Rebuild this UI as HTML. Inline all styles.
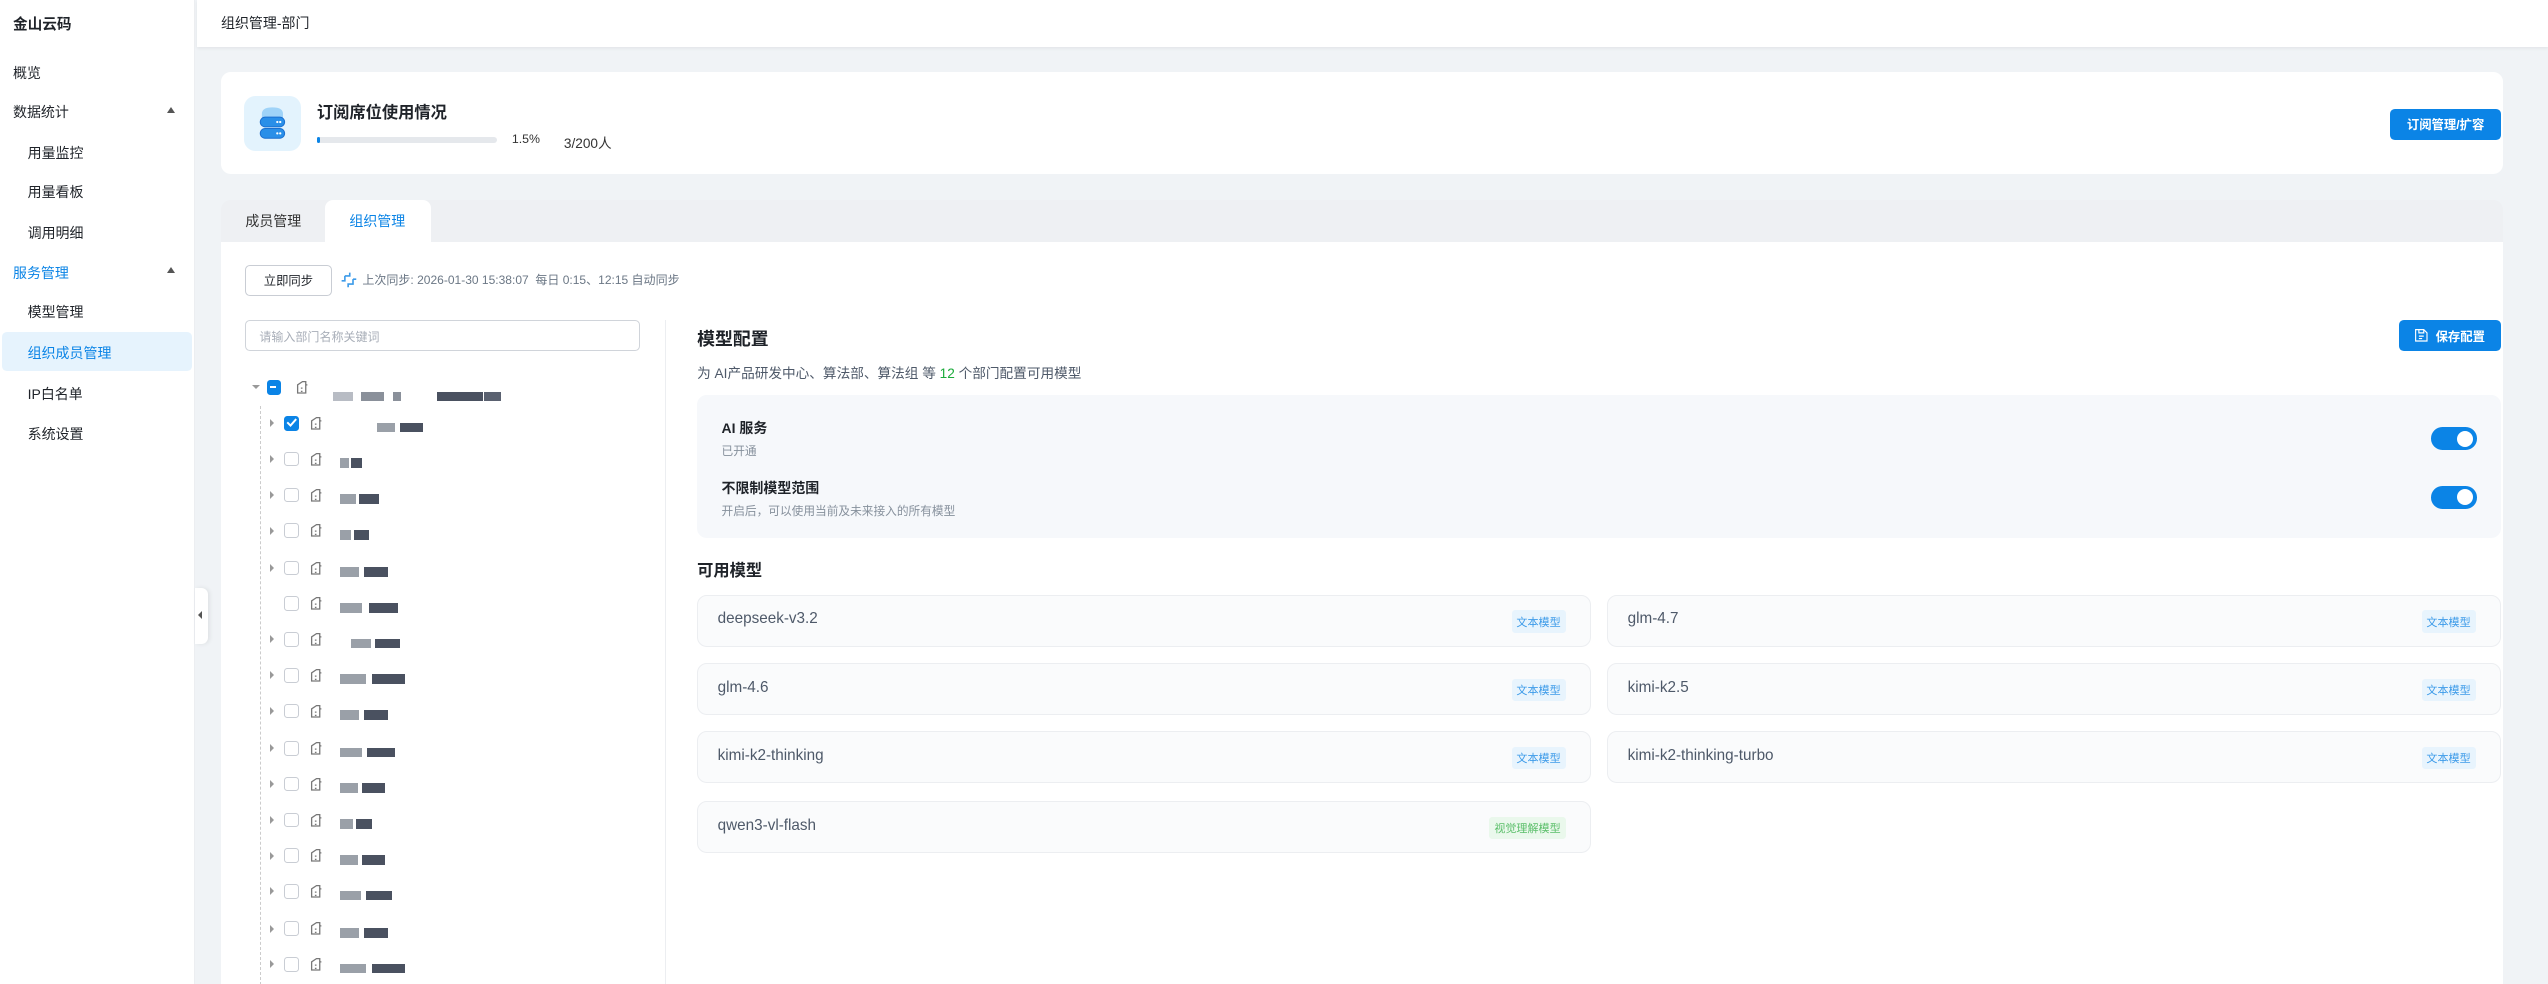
<!DOCTYPE html>
<html><head><meta charset="utf-8"><style>
*{box-sizing:border-box;margin:0;padding:0}
html,body{width:2548px;height:984px;overflow:hidden;background:#f0f3f6}
#r{zoom:1.625;width:1568px;height:606px;position:relative;font-family:"Liberation Sans","Noto Sans CJK SC",sans-serif;color:#1f2329;font-size:8.6px}
.a{position:absolute;white-space:nowrap}
.side{left:0;top:0;width:120px;height:606px;background:#fff;border-right:1px solid #eceef1}
.mi{position:absolute;left:8px;font-size:8.6px;color:#1f2329}
.sub{left:17px}
.caret{position:absolute;left:103px;width:0;height:0;border-left:3px solid transparent;border-right:3px solid transparent;border-bottom:4px solid #555}
.card{background:#fff;border-radius:6px}
.btn{background:#0b84e6;color:#fff;border-radius:3px;font-size:7.6px;font-weight:bold;display:flex;align-items:center;justify-content:center}
.cb{position:absolute;width:9px;height:9px;border:1px solid #c9cdd4;border-radius:2px;background:#fff}
.arr{position:absolute;width:0;height:0;border-top:2.5px solid transparent;border-bottom:2.5px solid transparent;border-left:3px solid #999}
.blk{position:absolute;height:6px;background:#8a909a}
.mc{position:absolute;width:550px;height:32px;background:#fafbfc;border:1px solid #eceef1;border-radius:6px}
.mc .n{position:absolute;left:12px;top:9px;font-size:9.4px;color:#4e5969}
.tag{position:absolute;right:15px;top:9px;font-size:6.8px;color:#3d9be9;background:#e8f4fd;padding:2px 3px;border-radius:2px}
.tg{position:absolute;left:1067px;width:28px;height:14px;border-radius:7px;background:#0b84e6}
.tg:after{content:"";position:absolute;right:2px;top:2px;width:10px;height:10px;border-radius:50%;background:#fff}
</style></head><body><div id="r">
<div class="a side">
 <div class="mi" style="top:8px;font-weight:bold;font-size:9px">金山云码</div>
 <div class="mi" style="top:39px">概览</div>
 <div class="mi" style="top:63px">数据统计</div><div class="caret" style="top:66px"></div>
 <div class="mi sub" style="top:88px">用量监控</div>
 <div class="mi sub" style="top:112px">用量看板</div>
 <div class="mi sub" style="top:137px">调用明细</div>
 <div class="mi" style="top:162px;color:#0b84e6">服务管理</div><div class="caret" style="top:164px"></div>
 <div class="mi sub" style="top:186px">模型管理</div>
 <div style="position:absolute;left:1px;top:204px;width:117px;height:24px;background:#e6f3fd;border-radius:3px"></div>
 <div class="mi sub" style="top:211px;color:#0b84e6">组织成员管理</div>
 <div class="mi sub" style="top:236px">IP白名单</div>
 <div class="mi sub" style="top:261px">系统设置</div>
</div>
<div class="a" style="left:120px;top:362px;width:8px;height:34px;background:#fff;border-radius:0 4px 4px 0;box-shadow:1px 0 3px rgba(0,0,0,.08)"><div style="position:absolute;left:2px;top:14px;border-top:3px solid transparent;border-bottom:3px solid transparent;border-right:3px solid #555"></div></div>
<div class="a" style="left:121px;top:0;width:1447px;height:29px;background:#fff;box-shadow:0 1px 2px rgba(0,0,0,.06)"><div class="a" style="left:15px;top:8px;font-size:8.6px">组织管理-部门</div></div>

<div class="a card" style="left:136px;top:44px;width:1404px;height:63px">
 <div class="a" style="left:14px;top:15px;width:35px;height:34px;background:#e3f3fd;border-radius:7px">
  <svg width="35" height="34" viewBox="0 0 35 34"><path d="M11 11q0-4 6.5-4t6.5 4v3h-13z" fill="#9fd3f8"/><rect x="10" y="13" width="15" height="6" rx="3" fill="#2a8fe8" stroke="#1a6fd0" stroke-width=".6"/><rect x="10" y="20" width="15" height="6" rx="3" fill="#2a8fe8" stroke="#1a6fd0" stroke-width=".6"/><circle cx="20.5" cy="16" r=".7" fill="#fff"/><circle cx="22.3" cy="16" r=".7" fill="#fff"/><circle cx="20.5" cy="23" r=".7" fill="#fff"/><circle cx="22.3" cy="23" r=".7" fill="#fff"/></svg>
 </div>
 <div class="a" style="left:59px;top:17px;font-size:10px;font-weight:bold">订阅席位使用情况</div>
 <div class="a" style="left:59px;top:40px;width:111px;height:4px;background:#e5e8ec;border-radius:2px"><div style="width:2px;height:4px;background:#0b84e6;border-radius:2px"></div></div>
 <div class="a" style="left:179px;top:37px;font-size:7.6px;color:#333">1.5%</div>
 <div class="a" style="left:211px;top:37px;font-size:8.4px;color:#333">3/200人</div>
 <div class="a btn" style="left:1335px;top:23px;width:68px;height:19px">订阅管理/扩容</div>
</div>

<div class="a" style="left:136px;top:123px;width:1404px;height:26px;background:#eef0f3;border-radius:6px 6px 0 0"></div>
<div class="a" style="left:151px;top:130px;font-size:8.6px;color:#333">成员管理</div>
<div class="a" style="left:200px;top:123px;width:65px;height:26px;background:#fff;border-radius:5px 5px 0 0"><div class="a" style="left:15px;top:7px;font-size:8.6px;color:#0b84e6">组织管理</div></div>
<div class="a" style="left:136px;top:149px;width:1404px;height:460px;background:#fff"></div>

<div class="a" style="left:151px;top:163px;width:53px;height:19px;border:1px solid #c9cdd4;border-radius:3px;font-size:7.6px;display:flex;align-items:center;justify-content:center">立即同步</div>
<svg class="a" style="left:209px;top:167px" width="11" height="11" viewBox="0 0 11 11"><path d="M3 3h3v-2M8 5v3H5v2M3 3v3H1M8 5h2" stroke="#3d9be9" fill="none" stroke-width="1"/></svg>
<div class="a" style="left:223px;top:167px;font-size:7.4px;color:#6b7785">上次同步: 2026-01-30 15:38:07&nbsp;&nbsp;每日 0:15、12:15 自动同步</div>

<div class="a" style="left:151px;top:197px;width:243px;height:19px;border:1px solid #d0d4da;border-radius:3px"><div class="a" style="left:8px;top:4px;font-size:7.4px;color:#a8aeb8">请输入部门名称关键词</div></div>
<div class="a" style="left:409px;top:197px;width:1px;height:409px;background:#eceef1"></div>

<div class="a" style="left:155px;top:237px;border-left:2.5px solid transparent;border-right:2.5px solid transparent;border-top:3px solid #999"></div>
<div class="cb" style="left:164px;top:234px;background:#0b84e6;border-color:#0b84e6"><div style="position:absolute;left:1.5px;top:3px;width:4px;height:1.3px;background:#fff"></div></div>
<div class="a" style="left:160px;top:250px;height:356px;border-left:1px dashed #ccc"></div>
<svg class="a" style="left:182px;top:234px" width="8" height="9"><path d="M1 8V3l3-2h2v7H1zM3 5h1M3 7h1M6 3h1" stroke="#777" fill="none" stroke-width=".8"/></svg>
<div class="blk" style="left:205px;top:241px;width:12px;background:#b8bcc4"></div><div class="blk" style="left:222px;top:241px;width:14px"></div><div class="blk" style="left:242px;top:241px;width:5px"></div><div class="blk" style="left:269px;top:241px;width:28px;background:#4a5160"></div><div class="blk" style="left:298px;top:241px;width:10px;background:#5a6170"></div>

<!-- children -->
<div id="kids"></div>
<script>
var ys=[261,283,305,327,350,372,394,416,438,461,483,505,527,549,572,594],h='';
var ws=[[232,28],[209,14],[209,24],[209,18],[209,30],[209,36],[216,30],[209,40],[209,30],[209,34],[209,28],[209,20],[209,28],[209,32],[209,30],[209,40]];
ys.forEach(function(y,i){
 if(i!=5)h+='<div class="arr" style="left:166px;top:'+(y-3)+'px"></div>';
 h+='<div class="cb" style="left:175px;top:'+(y-5)+'px'+(i==0?';background:#0b84e6;border-color:#0b84e6':'')+'">'+(i==0?'<svg width="9" height="9" style="position:absolute;left:-1px;top:-1px"><path d="M2 4.5l2 2 3.5-4" stroke="#fff" fill="none" stroke-width="1.2"/></svg>':'')+'</div>';
 h+='<svg class="a" style="left:191px;top:'+(y-5)+'px" width="9" height="9"><path d="M1 8V3l3-2h2v7H1zM3 5h1M3 7h1M6 3h1" stroke="#777" fill="none" stroke-width=".8"/></svg>';
 var x=ws[i][0],w=ws[i][1];
 h+='<div class="blk" style="left:'+x+'px;top:'+(y-1)+'px;width:'+Math.round(w*.4)+'px;background:#9aa0a8"></div>';
 h+='<div class="blk" style="left:'+(x+Math.round(w*.5))+'px;top:'+(y-1)+'px;width:'+Math.round(w*.5)+'px;background:#4a5160"></div>';
});
document.getElementById('kids').innerHTML=h;
</script>

<div class="a" style="left:429px;top:200px;font-size:11px;font-weight:bold">模型配置</div>
<div class="a btn" style="left:1476px;top:197px;width:63px;height:19px"><svg width="9" height="9" style="margin-right:4px"><path d="M1 1h5l2 2v5H1zM3 1v2h3V1M3 5h3M3 6.5h2" stroke="#fff" fill="none" stroke-width=".7"/></svg>保存配置</div>
<div class="a" style="left:429px;top:223px;font-size:8.4px;color:#4e5969">为 AI产品研发中心、算法部、算法组 等 <span style="color:#1bab3b">12</span> 个部门配置可用模型</div>

<div class="a" style="left:429px;top:243px;width:1110px;height:88px;background:#f6f8fb;border-radius:6px">
 <div class="a" style="left:15px;top:14px;font-size:8.6px;font-weight:bold">AI 服务</div>
 <div class="a" style="left:15px;top:29px;font-size:7.2px;color:#86909c">已开通</div>
 <div class="a" style="left:15px;top:51px;font-size:8.6px;font-weight:bold">不限制模型范围</div>
 <div class="a" style="left:15px;top:66px;font-size:7.2px;color:#86909c">开启后，可以使用当前及未来接入的所有模型</div>
 <div class="tg" style="top:20px"></div><div class="tg" style="top:56px"></div>
</div>

<div class="a" style="left:429px;top:343px;font-size:10px;font-weight:bold">可用模型</div>
<div class="mc" style="left:429px;top:366px"><div class="n">deepseek-v3.2</div><div class="tag">文本模型</div></div>
<div class="mc" style="left:989px;top:366px"><div class="n">glm-4.7</div><div class="tag">文本模型</div></div>
<div class="mc" style="left:429px;top:408px"><div class="n">glm-4.6</div><div class="tag">文本模型</div></div>
<div class="mc" style="left:989px;top:408px"><div class="n">kimi-k2.5</div><div class="tag">文本模型</div></div>
<div class="mc" style="left:429px;top:450px"><div class="n">kimi-k2-thinking</div><div class="tag">文本模型</div></div>
<div class="mc" style="left:989px;top:450px"><div class="n">kimi-k2-thinking-turbo</div><div class="tag">文本模型</div></div>
<div class="mc" style="left:429px;top:493px"><div class="n">qwen3-vl-flash</div><div class="tag" style="color:#5bbf6a;background:#eaf8ec">视觉理解模型</div></div>
</div></body></html>
